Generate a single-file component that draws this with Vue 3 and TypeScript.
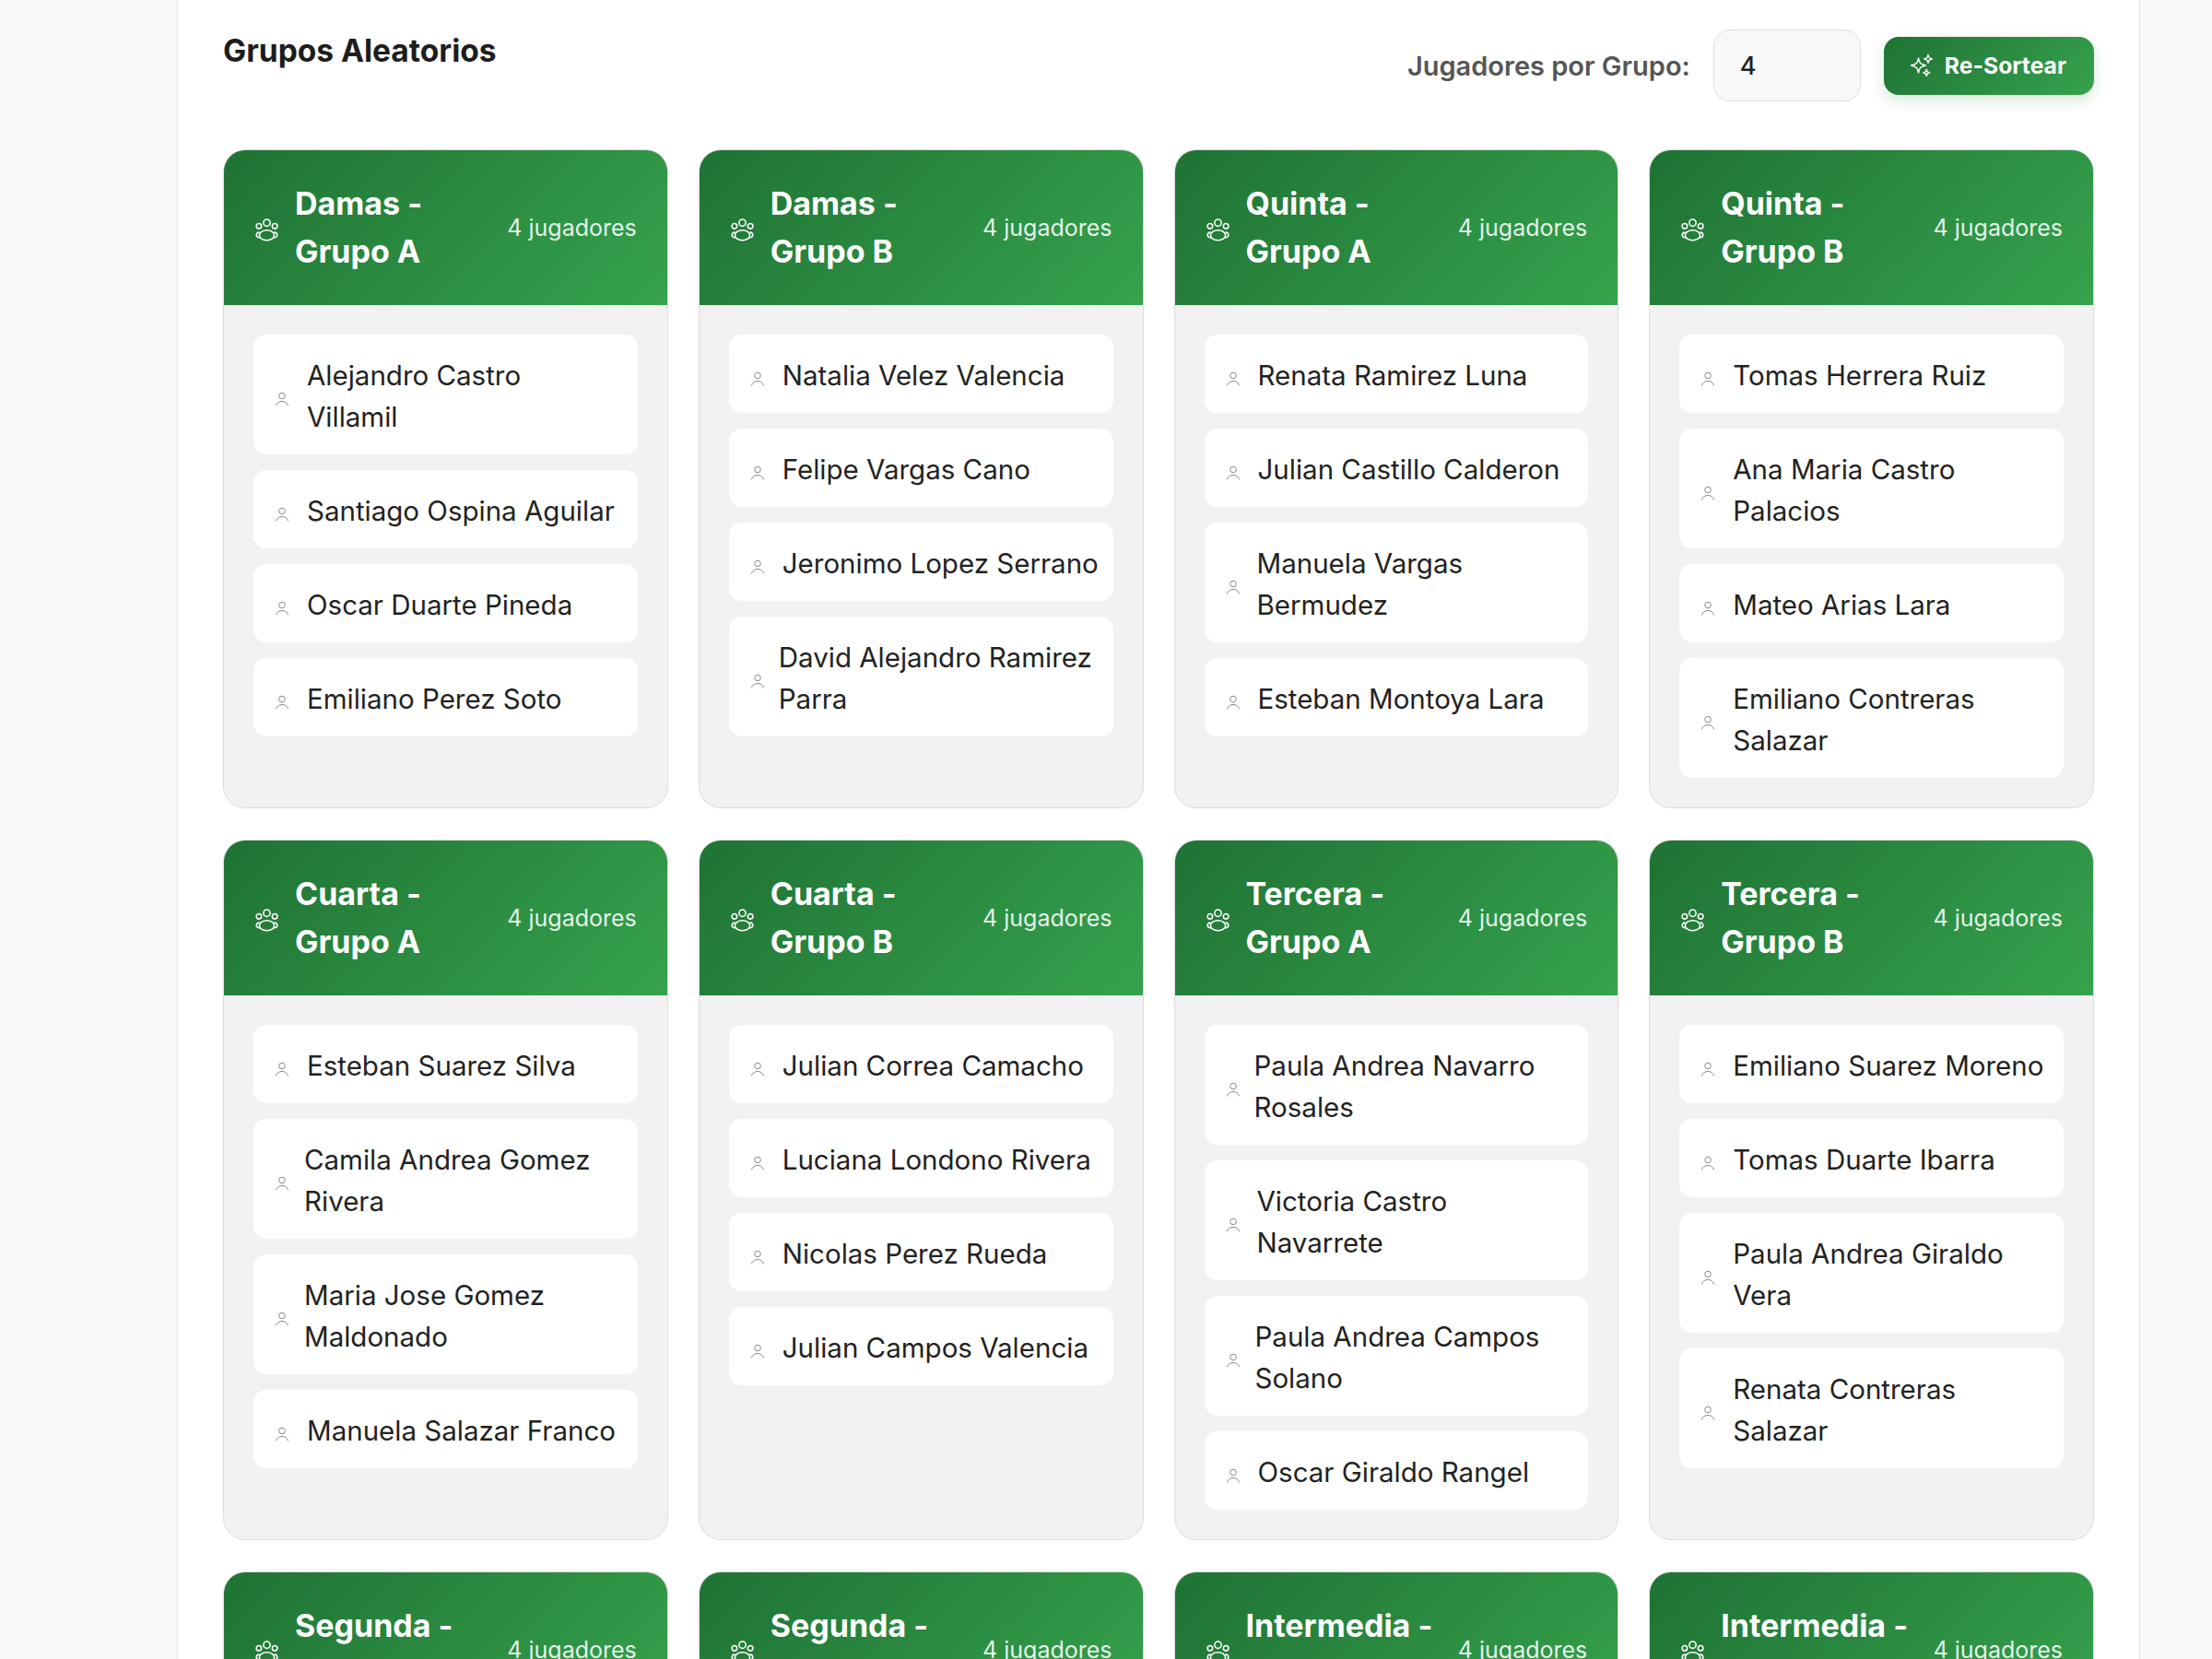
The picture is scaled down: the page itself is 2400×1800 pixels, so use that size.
<script setup lang="ts">
interface Group { title: string; players: string[] }
const groups: Group[] = [
  { title: 'Damas -\nGrupo A', players: ['Alejandro Castro\nVillamil', 'Santiago Ospina Aguilar', 'Oscar Duarte Pineda', 'Emiliano Perez Soto'] },
  { title: 'Damas -\nGrupo B', players: ['Natalia Velez Valencia', 'Felipe Vargas Cano', 'Jeronimo Lopez Serrano', 'David Alejandro Ramirez\nParra'] },
  { title: 'Quinta -\nGrupo A', players: ['Renata Ramirez Luna', 'Julian Castillo Calderon', 'Manuela Vargas\nBermudez', 'Esteban Montoya Lara'] },
  { title: 'Quinta -\nGrupo B', players: ['Tomas Herrera Ruiz', 'Ana Maria Castro\nPalacios', 'Mateo Arias Lara', 'Emiliano Contreras\nSalazar'] },
  { title: 'Cuarta -\nGrupo A', players: ['Esteban Suarez Silva', 'Camila Andrea Gomez\nRivera', 'Maria Jose Gomez\nMaldonado', 'Manuela Salazar Franco'] },
  { title: 'Cuarta -\nGrupo B', players: ['Julian Correa Camacho', 'Luciana Londono Rivera', 'Nicolas Perez Rueda', 'Julian Campos Valencia'] },
  { title: 'Tercera -\nGrupo A', players: ['Paula Andrea Navarro\nRosales', 'Victoria Castro\nNavarrete', 'Paula Andrea Campos\nSolano', 'Oscar Giraldo Rangel'] },
  { title: 'Tercera -\nGrupo B', players: ['Emiliano Suarez Moreno', 'Tomas Duarte Ibarra', 'Paula Andrea Giraldo\nVera', 'Renata Contreras\nSalazar'] },
  { title: 'Segunda -\nGrupo A', players: [] },
  { title: 'Segunda -\nGrupo B', players: [] },
  { title: 'Intermedia -\nGrupo A', players: [] },
  { title: 'Intermedia -\nGrupo B', players: [] },
]
// Long wrapped names squeeze the gap beside the icon by a few pixels.
const squeezed: Record<string, number> = {
  'David Alejandro Ramirez\nParra': 4,
  'Camila Andrea Gomez\nRivera': 3,
  'Maria Jose Gomez\nMaldonado': 3,
  'Paula Andrea Navarro\nRosales': 4,
  'Paula Andrea Campos\nSolano': 3,
  'Victoria Castro\nNavarrete': 1,
  'Manuela Vargas\nBermudez': 1,
}
const gapFor = (name: string): string => `${19 - (squeezed[name] ?? 0)}px`
</script>

<template>
  <div class="page">
    <section class="panel">
      <header class="top">
        <h2 class="heading">Grupos Aleatorios</h2>
        <div class="controls">
          <label class="label" for="per-group">Jugadores por Grupo:</label>
          <input id="per-group" class="count" type="text" value="4" />
          <button class="resort" type="button">
            <svg class="spark" viewBox="0 0 24 24" fill="none" stroke="currentColor" stroke-width="1.3" stroke-linejoin="round" stroke-linecap="round">
              <path d="M9.813 15.904 9 18.75l-.813-2.846a4.5 4.5 0 0 0-3.09-3.09L2.25 12l2.846-.813a4.5 4.5 0 0 0 3.09-3.09L9 5.25l.813 2.846a4.5 4.5 0 0 0 3.09 3.09L15.75 12l-2.846.813a4.5 4.5 0 0 0-3.09 3.09ZM18.259 8.715 18 9.75l-.259-1.035a3.375 3.375 0 0 0-2.455-2.456L14.25 6l1.036-.259a3.375 3.375 0 0 0 2.455-2.456L18 2.25l.259 1.035a3.375 3.375 0 0 0 2.456 2.456L21.750 6l-1.035.259a3.375 3.375 0 0 0-2.456 2.456ZM16.894 20.567 16.5 21.750l-.394-1.183a2.250 2.250 0 0 0-1.423-1.423L13.500 18.750l1.183-.394a2.250 2.250 0 0 0 1.423-1.423l.394-1.183.394 1.183a2.250 2.250 0 0 0 1.423 1.423l1.183.394-1.183.394a2.250 2.250 0 0 0-1.423 1.423Z" />
            </svg>
            Re-Sortear
          </button>
        </div>
      </header>
      <div class="grid">
        <article v-for="g in groups" :key="g.title" class="card">
          <div class="card-head">
            <div class="head-left">
              <svg class="group-icon" viewBox="0 0 26 24" fill="none" stroke="currentColor" stroke-width="1.5">
                <circle cx="13" cy="4.500" r="3.500" />
                <circle cx="4.700" cy="8" r="2.700" />
                <circle cx="21.300" cy="8" r="2.700" />
                <ellipse cx="13" cy="17.500" rx="7.800" ry="5.300" />
                <path d="M5.400 14.600a2.600 2.600 0 0 0-1.200 5.200c.5.100 1 .1 1.500-.1" />
                <path d="M20.600 14.600a2.600 2.600 0 0 1 1.200 5.200c-.5.100-1 .1-1.500-.1" />
              </svg>
              <h3 class="title">{{ g.title }}</h3>
            </div>
            <span class="tally">4 jugadores</span>
          </div>
          <ul class="list">
            <li v-for="p in g.players" :key="p" class="player" :style="{ gap: gapFor(p) }">
              <svg class="user-icon" viewBox="0 0 16 16" fill="none" stroke="currentColor" stroke-width="1">
                <circle cx="8" cy="4.500" r="3.300" />
                <path d="M1.500 15c.8-3 3.400-4.500 6.500-4.500s5.700 1.500 6.500 4.500" stroke-linecap="round" />
              </svg>
              <span class="name">{{ p }}</span>
            </li>
          </ul>
        </article>
      </div>
    </section>
  </div>
</template>

<style>
html, body { margin: 0; background: #f8f8f8; }
</style>

<style scoped>
.page {
  height: 1800px;
  overflow: hidden;
  padding: 0 78px 0 192px;
  box-sizing: border-box;
  font-family: "Inter", "Noto Sans", sans-serif;
}
.panel {
  background: #fff;
  border-left: 1px solid #e4e4e4;
  border-right: 1px solid #e4e4e4;
  padding: 32px 49px 0;
  min-height: 1800px;
  box-sizing: border-box;
}
.top {
  display: flex;
  justify-content: space-between;
  align-items: flex-start;
  height: 130px;
}
.heading {
  margin: 0;
  font-size: 33.5px;
  line-height: 46px;
  font-weight: 700;
  color: #1d1d1d;
}
.controls { display: flex; align-items: center; gap: 25px; }
.label { font-size: 29px; font-weight: 600; color: #555; }
.count {
  width: 160px;
  height: 78px;
  box-sizing: border-box;
  border: 1.5px solid #ddd;
  border-radius: 18px;
  background: #f8f8f8;
  padding: 0 28px;
  font: 500 27px "Inter", sans-serif;
  color: #222;
}
.resort {
  display: flex;
  align-items: center;
  gap: 11px;
  height: 63px;
  padding: 0 30px 0 27px;
  border: none;
  border-radius: 16px;
  background: linear-gradient(135deg, #1f7234, #36a34d);
  color: #fff;
  font: 700 24.700px "Inter", sans-serif;
  box-shadow: 0 6px 16px rgba(46, 125, 50, 0.18);
}
.spark { width: 28px; height: 28px; }
.grid {
  display: grid;
  grid-template-columns: repeat(4, 1fr);
  column-gap: 33px;
  row-gap: 34px;
}
.card {
  background: #f2f2f2;
  border: 1.5px solid #dcdcdc;
  border-radius: 24px;
  overflow: hidden;
}
.card-head {
  display: flex;
  justify-content: space-between;
  align-items: center;
  padding: 32px 34px;
  height: 169px;
  box-sizing: border-box;
  margin: -1px -1px 0;
  background: linear-gradient(135deg, #1f7234, #36a34d);
  color: #fff;
}
.head-left { display: flex; align-items: center; gap: 17px; }
.group-icon { width: 27px; height: 25px; margin-top: 6px; flex: none; }
.title {
  margin: 0;
  white-space: pre-line;
  font-size: 34px;
  line-height: 52px;
  font-weight: 700;
}
.tally { font-size: 25px; color: rgba(255, 255, 255, 0.9); }
.list {
  list-style: none;
  margin: 0;
  padding: 32px;
  display: flex;
  flex-direction: column;
  gap: 17px;
}
.player {
  display: flex;
  align-items: center;
  padding: 22px 23px 18px;
  background: #fff;
  border-radius: 14px;
}
.user-icon { width: 16px; height: 16px; color: #888; flex: none; margin-top: 6px; }
.name {
  white-space: pre;
  font-size: 29.500px;
  line-height: 45px;
  color: #222;
}
</style>
